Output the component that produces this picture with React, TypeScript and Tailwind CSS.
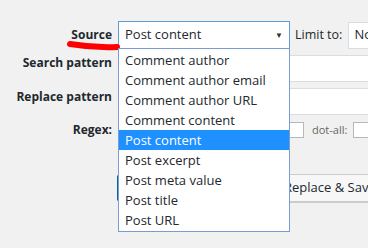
import React from "react";

const options = [
  "Comment author",
  "Comment author email",
  "Comment author URL",
  "Comment content",
  "Post content",
  "Post excerpt",
  "Post meta value",
  "Post title",
  "Post URL",
];

const Label = ({ text, className }: { text: string; className?: string }) => (
  <div
    className={`w-[118px] shrink-0 pr-[6px] text-right text-[12px] font-bold text-[#23282d] ${className ?? ""}`}
  >
    {text}
  </div>
);

const App = () => {
  return (
    <div
      className="relative w-[368px] h-[248px] overflow-hidden bg-[#f1f1f1] text-[#23282d]"
      style={{ fontFamily: '"Open Sans", "Noto Sans", sans-serif' }}
    >
      <div className="h-[21px] flex flex-col">
        <p className="-mt-[18px] pl-[40px] whitespace-nowrap text-[13px] leading-[18px] text-[#444]">
          Simply type your pattern, say where to apply it, and then go happily away
        </p>
      </div>

      <div className="flex flex-col">
        {/* source row */}
        <div className="flex items-center h-[28px]">
          <Label text="Source" />
          <div className="w-[172px] h-[28px] shrink-0 flex items-center justify-between pl-[6px] pr-[6px] bg-white border border-[#5b9dd9] text-[13px]">
            <span>Post content</span>
            <span className="text-[8px] text-[#333]">▼</span>
          </div>
          <span className="ml-[5px] text-[12.5px] whitespace-nowrap">Limit to:</span>
          <div className="ml-[6px] w-[60px] h-[27px] shrink-0 flex items-center pl-[5px] bg-white border border-[#ddd] text-[13px]">
            None
          </div>
        </div>

        {/* search pattern */}
        <div className="flex items-start mt-[6px] h-[27px]">
          <Label text="Search pattern" className="leading-[18px] -mt-[1px]" />
          <div className="w-[300px] h-[27px] shrink-0 bg-white border border-[#ddd]" />
        </div>

        {/* replace pattern */}
        <div className="flex items-start mt-[6px] h-[27px]">
          <Label text="Replace pattern" className="leading-[18px]" />
          <div className="w-[300px] h-[27px] shrink-0 bg-white border border-[#ddd]" />
        </div>

        {/* regex */}
        <div className="flex items-center mt-[7px] h-[16px]">
          <Label text="Regex:" className="leading-[18px]" />
          <div className="ml-[170px] w-[16px] h-[16px] shrink-0 bg-white border border-[#b4b9be]" />
          <span className="ml-[8px] text-[11px] text-[#666] whitespace-nowrap">dot-all:</span>
          <div className="ml-[6px] w-[16px] h-[16px] shrink-0 bg-white border border-[#b4b9be]" />
        </div>

        {/* buttons */}
        <div className="flex items-center mt-[36px] h-[28px] pl-[117px] gap-[6px]">
          <div className="w-[150px] h-[28px] shrink-0 bg-[#0085ba] border border-[#006799] rounded-[3px]" />
          <div className="h-[28px] shrink-0 pl-[10px] pr-[10px] flex items-center bg-[#f7f7f7] border border-[#ccc] rounded-[3px] shadow-[0_1px_0_#ccc] text-[13px] whitespace-nowrap">
            Replace &amp; Save
          </div>
        </div>
      </div>

      {/* red underline mark */}
      <svg className="absolute left-0 top-0" width="130" height="60">
        <path
          d="M70 44 Q 94 48 117 47"
          stroke="#f00"
          strokeWidth="6"
          fill="none"
          strokeLinecap="round"
        />
      </svg>

      {/* open dropdown list */}
      <ul className="absolute left-[118px] top-[48px] w-[172px] py-[1px] bg-white border border-[#7a9cd3] text-[13px]">
        {options.map((o) => (
          <li
            key={o}
            className={`h-[20px] leading-[20px] pl-[6px] whitespace-nowrap ${
              o === "Post content" ? "bg-[#1e90ff] text-white" : "text-[#23282d]"
            }`}
          >
            {o}
          </li>
        ))}
      </ul>
    </div>
  );
};

export default App;
